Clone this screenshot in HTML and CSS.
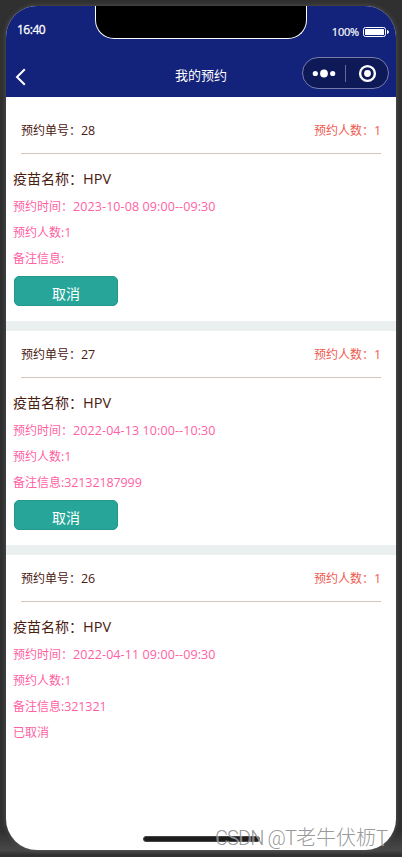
FILE: index.html
```html
<!DOCTYPE html>
<html lang="zh-CN">
<head>
<meta charset="utf-8">
<title>我的预约</title>
<link rel="stylesheet" href="styles.css">
</head>
<body>
<div class="phone">
  <header class="header">
    <div class="status">
      <span class="clock">16:40</span>
      <span class="power">100%
        <svg width="26" height="10" viewBox="0 0 26 10"><rect x=".5" y=".5" width="22" height="9" rx="2" fill="none" stroke="#fff"/><rect x="2" y="2" width="19" height="6" rx=".5" fill="#fff"/><path d="M24 3Q26 3.5 26 5T24 7Z" fill="#fff"/></svg>
      </span>
    </div>
    <div class="nav">
      <svg class="back" width="12" height="18" viewBox="0 0 12 18"><path d="M9.8 1.2 2 9l7.8 7.8" fill="none" stroke="#fff" stroke-width="2"/></svg>
      <h1 class="title">我的预约</h1>
      <svg class="capsule" width="87" height="32" viewBox="0 0 87 32"><rect x=".5" y=".5" width="86" height="31" rx="15.5" fill="#0e1958" stroke="#777ca8"/><g fill="#fff"><circle cx="13.3" cy="16.5" r="2.6"/><circle cx="22" cy="16.5" r="3.9"/><circle cx="30.7" cy="16.5" r="2.6"/><circle cx="65.5" cy="16.5" r="3.4"/></g><circle cx="65.5" cy="16.5" r="7.4" fill="none" stroke="#fff" stroke-width="2.4"/><path d="M43.5 8v17" stroke="#646b9c"/></svg>
    </div>
  </header>
  <div class="notch"></div>
  <main class="list">
    <section class="card">
      <div class="head"><span>预约单号：<b>28</b></span><span class="count">预约人数：<b>1</b></span></div>
      <h2 class="name">疫苗名称：<b>HPV</b></h2>
      <p class="line">预约时间：<b class="date">2023-10-08 09:00--09:30</b></p>
      <p class="line">预约人数<b>:1</b></p>
      <p class="line">备注信息<b>:</b></p>
      <button class="cancel">取消</button>
    </section>
    <section class="card">
      <div class="head"><span>预约单号：<b>27</b></span><span class="count">预约人数：<b>1</b></span></div>
      <h2 class="name">疫苗名称：<b>HPV</b></h2>
      <p class="line">预约时间：<b class="date">2022-04-13 10:00--10:30</b></p>
      <p class="line">预约人数<b>:1</b></p>
      <p class="line">备注信息<b>:32132187999</b></p>
      <button class="cancel">取消</button>
    </section>
    <section class="card">
      <div class="head"><span>预约单号：<b>26</b></span><span class="count">预约人数：<b>1</b></span></div>
      <h2 class="name">疫苗名称：<b>HPV</b></h2>
      <p class="line">预约时间：<b class="date">2022-04-11 09:00--09:30</b></p>
      <p class="line">预约人数<b>:1</b></p>
      <p class="line">备注信息<b>:321321</b></p>
      <p class="line">已取消</p>
    </section>
  </main>
  <div class="home"></div>
</div>
<div class="mark"><span>CSDN @T</span>老牛伏枥<span>T</span></div>
</body>
</html>
```
FILE: styles.css
```css
* { box-sizing: border-box; }
body {
  margin: 0;
  width: 402px;
  height: 857px;
  padding: 6px;
  position: relative;
  overflow: hidden;
  background: linear-gradient(#303030, #303030 97%, #484848 99.2%, #303030 99.8%);
  font-family: "Open Sans", "Noto Sans CJK SC", sans-serif;
}
b { font-weight: 400; font-size: 12.5px; letter-spacing: -.1px; }
.date { letter-spacing: .1px; }
.phone {
  position: relative;
  height: 844px;
  border-radius: 31px;
  overflow: hidden;
  background: #fff;
  box-shadow: 0 0 5px #555;
}
.header { height: 91px; background: #13227a; color: #fff; }
.status {
  display: flex;
  justify-content: space-between;
  height: 48px;
  padding: 16px 7px 0 11px;
  font-size: 12px;
  line-height: 16px;
}
.clock { letter-spacing: -.5px; -webkit-text-stroke: .3px #fff; }
.power {
  display: flex;
  align-items: center;
  gap: 4px;
  height: 18px;
  padding-top: 2px;
  font-size: 11px;
  letter-spacing: -.2px;
  -webkit-text-stroke: .2px #fff;
}
.nav {
  display: grid;
  grid-template-columns: 87px 1fr 87px;
  align-items: center;
  height: 43px;
  padding: 0 7px 5px 9px;
}
.back { margin-top: 8px; }
.title { margin: 4px 2px 0 0; font-size: 13px; font-weight: 400; text-align: center; line-height: 20px; }
.notch {
  position: absolute;
  left: 89px;
  top: 0;
  width: 212px;
  height: 33px;
  border: 1px solid #fff;
  border-top: 0;
  border-radius: 0 0 19px 19px;
  background: #000;
}
.list { padding-top: 10px; color: #4b2010; }
.card { height: 224px; padding: 0 7px; border-bottom: 10px solid #eaf0f0; }
.card:last-child { border: 0; }
.head {
  display: flex;
  justify-content: space-between;
  height: 47px;
  margin: 0 8px;
  border-bottom: 1px solid #d5c4bf;
  font-size: 12px;
  line-height: 47px;
}
.count { color: #ef5a50; }
.name { height: 30px; margin: 10px 0 0; font-size: 14px; font-weight: 400; line-height: 30px; }
.name b { font-size: 14.5px; letter-spacing: .1px; }
.line { height: 26px; margin: 0; color: #ff5fa2; font-size: 12px; line-height: 26px; }
.cancel {
  display: block;
  width: 104px;
  height: 30px;
  margin: 4px 1px 0;
  padding: 4px 0 0;
  border: 1px solid #24978c;
  border-radius: 5px;
  background: #27a599;
  color: #fff;
  font: 14px/24px "Noto Sans CJK SC", sans-serif;
}
.home {
  position: absolute;
  left: 137px;
  top: 830px;
  width: 117px;
  height: 6px;
  border-radius: 3px;
  background: #1d1d1d;
  border: 1px solid #444;
}
.mark {
  position: absolute;
  left: 215px;
  top: 824px;
  color: rgba(140, 140, 140, .9);
  font: 300 20px/28px Roboto, "Noto Sans CJK SC", sans-serif;
  white-space: nowrap;
  text-shadow: 1px 1px 0 rgba(255, 255, 255, .5);
}
.mark span { letter-spacing: -.9px; }
```
